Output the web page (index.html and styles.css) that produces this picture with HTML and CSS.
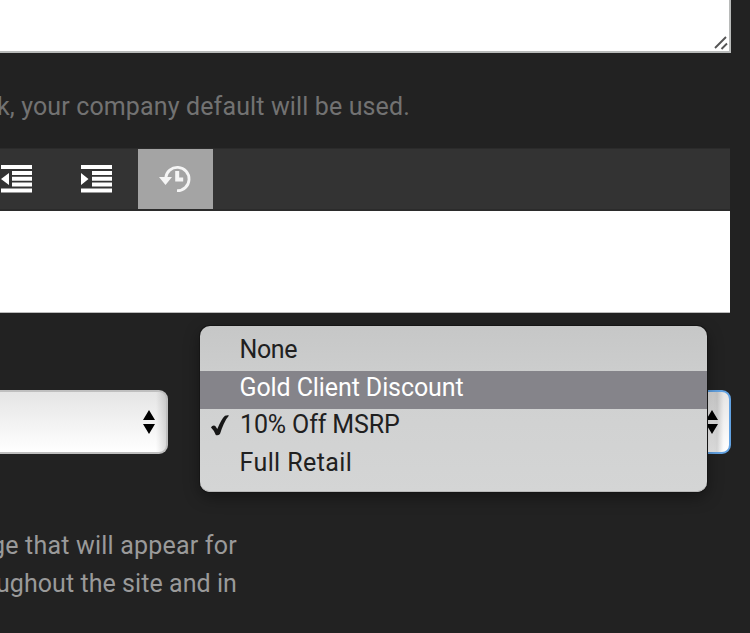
FILE: index.html
```html
<!DOCTYPE html>
<html lang="en">
<head>
<meta charset="utf-8">
<title>Company settings</title>
<link rel="stylesheet" href="styles.css">
</head>
<body>
<main class="page">
  <div class="textarea">
    <svg class="grip" width="16" height="16" viewBox="0 0 16 16"><path d="M2 13 13 2M8.500 14l5.500-5.500"/></svg>
  </div>
  <p class="hint"><span class="hint-text">k, your company default will be used.</span></p>
  <section class="editor">
    <div class="toolbar">
      <svg class="indent" width="31" height="28" viewBox="0 0 31 28"><path d="M0 0h31v4H0zM11 6h20v4H11zM11 11.7h20v4H11zM11 17.500h20v4H11zM0 23.500h31v4H0zM8 8v12L0 14z"/></svg>
      <svg class="indent" width="31" height="28" viewBox="0 0 31 28"><path d="M0 0h31v4H0zM11 6h20v4H11zM11 11.7h20v4H11zM11 17.500h20v4H11zM0 23.500h31v4H0zM0 8v12l7.500-6z"/></svg>
      <div class="history">
        <svg width="32" height="28" viewBox="0 0 32 28"><path class="ring" d="M6.7 13A11.7 11.7 0 1 1 18 25.7"/><path class="fill" d="M0 12h13L6.5 20zM16.2 6h4v6.4h4v4h-8z"/></svg>
      </div>
    </div>
    <div class="canvas"></div>
  </section>
  <div class="selects">
    <div class="select first"><svg class="arrows" width="12" height="24" viewBox="0 0 12 24"><path d="M6 0l6 10H0zM0 14h12L6 24z"/></svg></div>
    <div class="select focused"><svg class="arrows" width="12" height="24" viewBox="0 0 12 24"><path d="M6 0l6 10H0zM0 14h12L6 24z"/></svg></div>
  </div>
  <p class="note"><span class="line note-one">ge that will appear for</span><span class="line note-two">ughout the site and in</span></p>
  <ul class="menu">
    <li><span class="none">None</span></li>
    <li class="active"><span class="gold">Gold Client Discount</span></li>
    <li><svg class="check" width="18" height="21" viewBox="0 0 18 21"><path d="M0 12.5C1 10.2 3.500 9.8 4.500 11.2L6.3 14C9 7.500 11.500 3 14 .8Q16 0 18 .4C14 5 11 12 9 19Q6.8 21 4.800 20 3.2 15.5 0 12.5z"/></svg><span class="msrp">10% Off MSRP</span></li>
    <li><span class="retail">Full Retail</span></li>
  </ul>
</main>
</body>
</html>
```

FILE: styles.css
```css
* { box-sizing: border-box; }
body {
  margin: 0;
  background: #222;
  font: 25px/38px Roboto, "Liberation Sans", sans-serif;
  white-space: nowrap;
}
svg { display: block; flex: none; }
.page {
  position: relative;
  width: 750px;
  height: 633px;
  overflow: hidden;
}
.textarea {
  display: flex;
  align-items: flex-end;
  justify-content: flex-end;
  width: 731px;
  height: 53px;
  background: #fff;
  border: solid #b8bab9;
  border-width: 0 2px 2px 0;
}
.grip { fill: none; stroke: #555; stroke-width: 1.9; }
.hint {
  height: 95px;
  margin: 0;
  padding: 35px 0 0;
  color: #727272;
}
.hint-text { display: block; margin-left: -3px; letter-spacing: .13px; }
.editor {
  width: 730px;
  height: 165px;
  background: #333;
}
.toolbar {
  display: flex;
  align-items: center;
  gap: 48px;
  height: 63px;
  padding: 1px 0 1px 1px;
  border-top: 1px solid #2b2b2b;
  border-bottom: 2px solid #2b2b2b;
}
.indent { fill: #fff; }
.indent + .indent { margin-left: .5px; }
.history {
  display: flex;
  align-items: center;
  justify-content: center;
  width: 75px;
  height: 60px;
  padding-right: 2px;
  margin-left: -21.500px;
  background: #a4a4a4;
}
.ring { fill: none; stroke: #f5f5f5; stroke-width: 2.8; }
.fill { fill: #f5f5f5; }
.canvas { height: 102px; background: #fff; border-bottom: 1px solid #bbb; }
.selects {
  display: flex;
  justify-content: space-between;
  width: 731px;
  padding-top: 77px;
}
.select {
  display: flex;
  align-items: center;
  justify-content: flex-end;
  width: 531px;
  height: 64px;
  padding-right: 11px;
  background: linear-gradient(90deg, #0000 calc(100% - 10px), #0002), linear-gradient(#e5e5e5, #fff);
  border: 2px solid #bfbfbf;
  border-radius: 9px;
}
.first { width: 168px; padding-right: 11.500px; border-left: 0; border-radius: 0 9px 9px 0; }
.focused {
  border-color: #62a2e2;
  background: linear-gradient(90deg, #0000 calc(100% - 20px), #0002 calc(100% - 12px), #0000 calc(100% - 5px)), linear-gradient(#e5e5e5, #fff);
}
.note { margin: 0; padding-top: 73px; color: #9a9a9a; }
.line { display: block; }
.note-one { margin-left: -9px; letter-spacing: .2px; }
.note-two { margin-left: -4px; letter-spacing: .06px; }
.menu {
  position: absolute;
  left: 200px;
  top: 326px;
  width: 507px;
  height: 166px;
  margin: 0;
  padding: 7.4px 0 0;
  list-style: none;
  color: #202020;
  line-height: 34px;
  background: linear-gradient(#c6c7c7, #d0d1d1 45%, #d4d5d5);
  border-radius: 10px;
  box-shadow: 0 0 0 1px #151515, inset 0 -1px #b8b8b8, 0 5px 16px #0006;
}
.menu li {
  display: flex;
  align-items: center;
  height: 37.6px;
  padding: 0 0 4px 39.500px;
}
.menu .active { color: #fff; background: #85848a; }
.check { margin: 0 11px 0 -28.500px; fill: #171717; }
.none { letter-spacing: -.4px; }
.gold { letter-spacing: -.1px; }
.msrp { letter-spacing: -.13px; }
.retail { letter-spacing: .4px; }
```
